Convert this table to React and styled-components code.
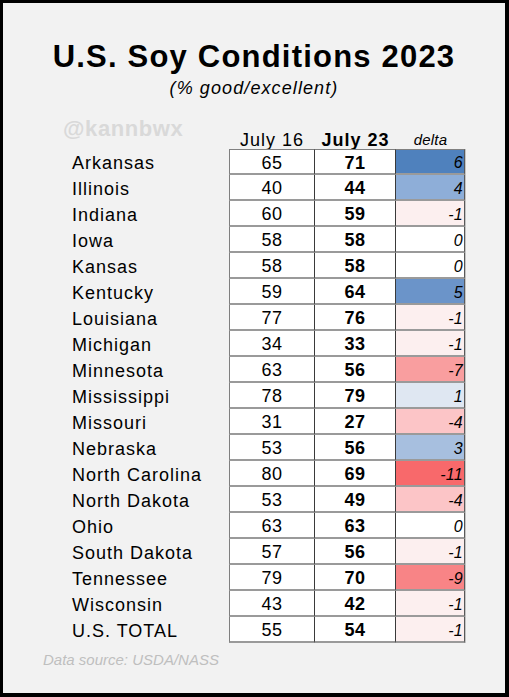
import React from 'react';
import styled, { createGlobalStyle } from 'styled-components';

const Global = createGlobalStyle`
  body {
    margin: 0;
    font-family: "Liberation Sans", Arial, sans-serif;
  }
`;

const Frame = styled.div`
  width: 509px;
  height: 697px;
  box-sizing: border-box;
  background: #f2f2f2;
  border: solid #000;
  border-width: 3px 4px 4px 3px;
  color: #000;
  padding-top: 37px;
`;

const Title = styled.h1`
  margin: 0;
  font-size: 31px;
  letter-spacing: 1.2px;
  font-weight: bold;
  text-align: center;
  line-height: 34px;
`;

const Subtitle = styled.div`
  font-size: 18px;
  letter-spacing: 1.1px;
  font-style: italic;
  text-align: center;
  line-height: 20px;
  margin-top: 4px;
`;

const Board = styled.div`
  display: grid;
  grid-template-columns: 157px 86px 81px 69px;
  margin-left: 69px;
  margin-top: 21px;
`;

const Watermark = styled.div`
  font-size: 22px;
  letter-spacing: 0.6px;
  font-weight: bold;
  color: #d9d9d9;
  margin: -2px 0 0 -9px;
  line-height: 24px;
  height: 30px;
`;

const Head = styled.div`
  height: 30px;
  display: flex;
  align-items: flex-end;
  justify-content: center;
  box-sizing: border-box;
  font-size: ${p => (p.$small ? '15px' : '18px')};
  letter-spacing: ${p => (p.$small ? '0.2px' : '1px')};
  font-weight: ${p => (p.$bold ? 'bold' : 'normal')};
  font-style: ${p => (p.$italic ? 'italic' : 'normal')};
  line-height: 18px;
`;

const Name = styled.div`
  height: 26px;
  font-size: 18px;
  letter-spacing: 1px;
  line-height: 26px;
  padding-top: 1px;
  box-sizing: border-box;
`;

const Cell = styled.div`
  height: 26px;
  box-sizing: border-box;
  background: ${p => p.$bg || '#fff'};
  border-right: 1px solid #3a3a3a;
  border-bottom: 2px solid #9a9a9a;
  border-top: ${p => (p.$first ? '1px solid #808080' : 'none')};
  border-left: ${p => (p.$lead ? '1px solid #7f7f7f' : 'none')};
  font-size: 18px;
  letter-spacing: 0.5px;
  font-weight: ${p => (p.$bold ? 'bold' : 'normal')};
  display: flex;
  align-items: center;
  justify-content: center;
  padding-top: 3px;
`;

const Delta = styled(Cell)`
  font-size: 16px;
  letter-spacing: 0.3px;
  font-style: italic;
  font-weight: normal;
  justify-content: flex-end;
  align-items: flex-end;
  padding: 0 1px 1px 0;
  border-right-color: #595959;
  box-shadow: 1px 0 0 #c4c4c4;
`;

const Source = styled.div`
  margin: 8px 0 0 40px;
  font-size: 15px;
  font-style: italic;
  color: #bfbfbf;
`;

const rows = [
  ['Arkansas', 65, 71, 6],
  ['Illinois', 40, 44, 4],
  ['Indiana', 60, 59, -1],
  ['Iowa', 58, 58, 0],
  ['Kansas', 58, 58, 0],
  ['Kentucky', 59, 64, 5],
  ['Louisiana', 77, 76, -1],
  ['Michigan', 34, 33, -1],
  ['Minnesota', 63, 56, -7],
  ['Mississippi', 78, 79, 1],
  ['Missouri', 31, 27, -4],
  ['Nebraska', 53, 56, 3],
  ['North Carolina', 80, 69, -11],
  ['North Dakota', 53, 49, -4],
  ['Ohio', 63, 63, 0],
  ['South Dakota', 57, 56, -1],
  ['Tennessee', 79, 70, -9],
  ['Wisconsin', 43, 42, -1],
  ['U.S. TOTAL', 55, 54, -1],
];

const shade = {
  6: '#4f81bd',
  5: '#6b94c9',
  4: '#8eaed8',
  3: '#a7bfdf',
  1: '#dfe7f2',
  0: '#ffffff',
  '-1': '#fcefef',
  '-4': '#fcc5c7',
  '-7': '#f99e9f',
  '-9': '#f88486',
  '-11': '#f8696b',
};

export default function App() {
  return (
    <Frame>
      <Global />
      <Title>U.S. Soy Conditions 2023</Title>
      <Subtitle>(% good/excellent)</Subtitle>
      <Board>
        <Watermark>@kannbwx</Watermark>
        <Head>July 16</Head>
        <Head $bold>July 23</Head>
        <Head $italic $small>delta</Head>
        {rows.map(([name, a, b, d], i) => (
          <React.Fragment key={name}>
            <Name>{name}</Name>
            <Cell $lead $first={i === 0}>{a}</Cell>
            <Cell $bold $first={i === 0}>{b}</Cell>
            <Delta $first={i === 0} $bg={shade[d]}>{d}</Delta>
          </React.Fragment>
        ))}
      </Board>
      <Source>Data source: USDA/NASS</Source>
    </Frame>
  );
}
